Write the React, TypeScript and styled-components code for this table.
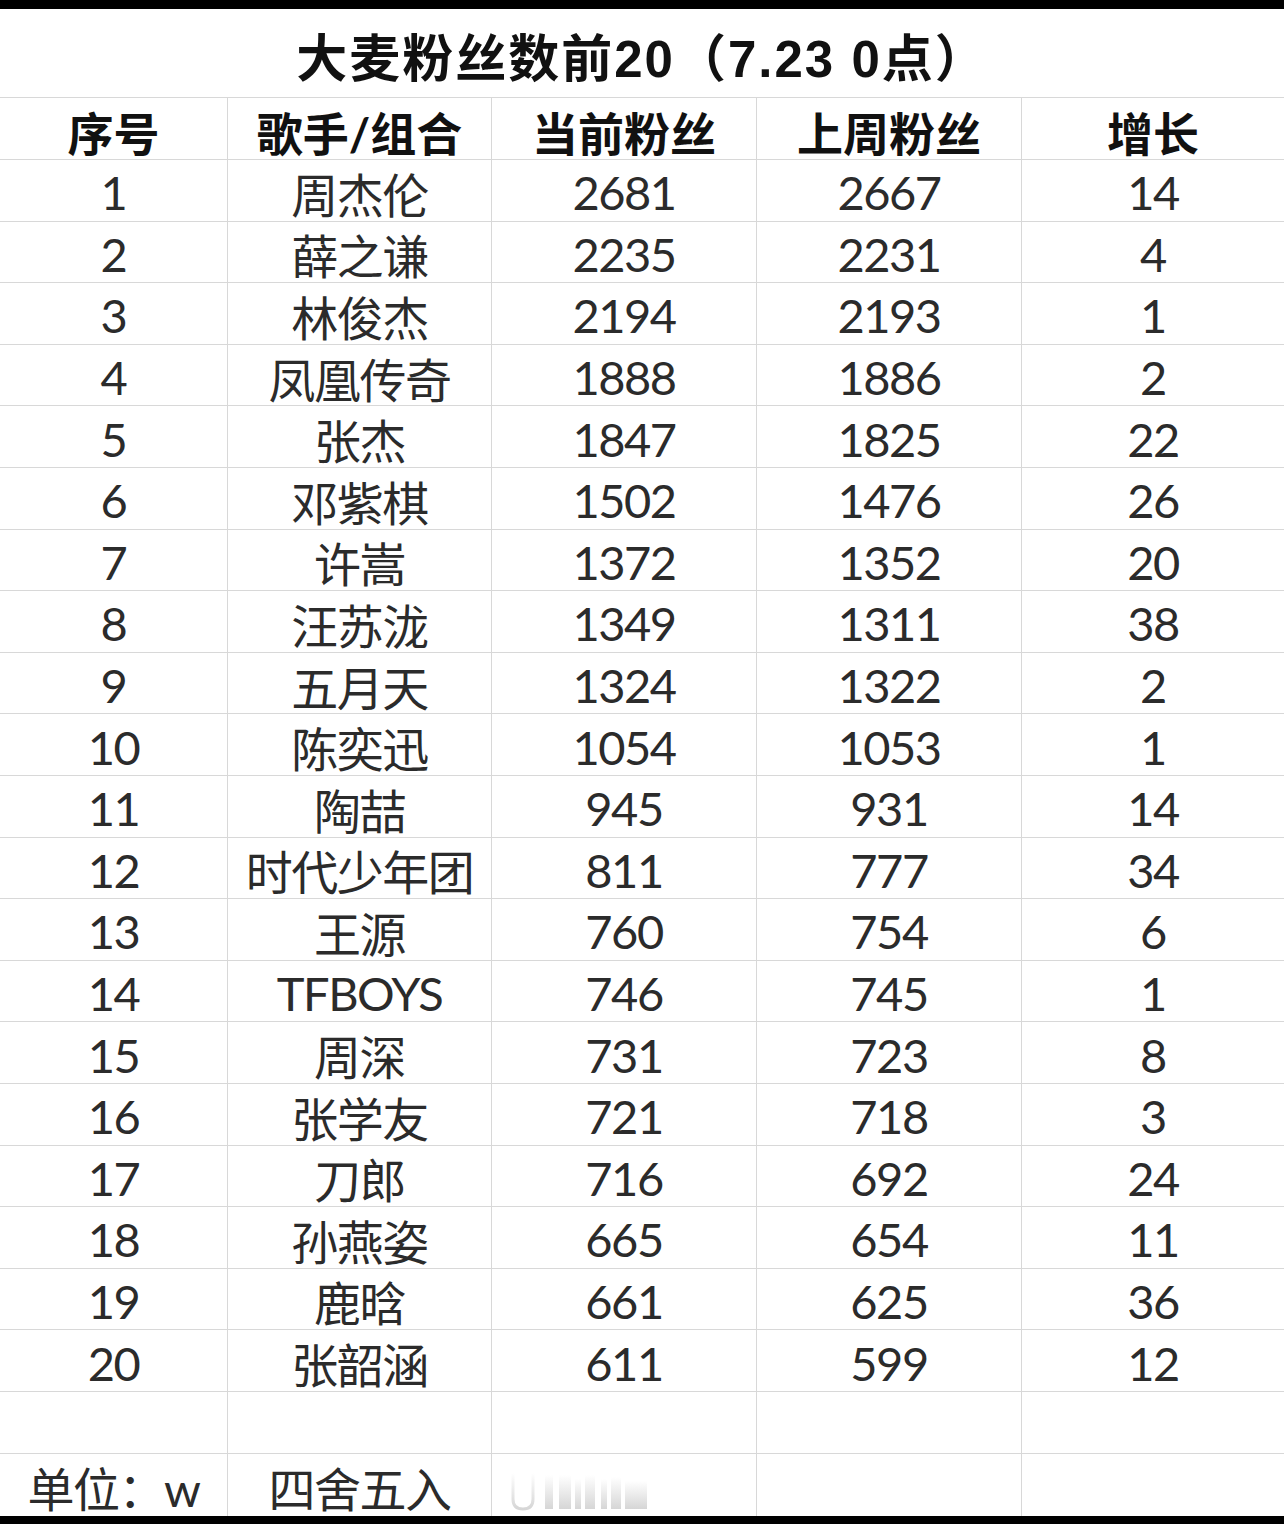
import styled, { createGlobalStyle } from 'styled-components'

// ─── Data ─────────────────────────────────────────────────────────────────────

interface Row {
  rank: number
  name: string
  current: number
  lastWeek: number
  growth: number
}

const rows: Row[] = [
  { rank: 1, name: '周杰伦', current: 2681, lastWeek: 2667, growth: 14 },
  { rank: 2, name: '薛之谦', current: 2235, lastWeek: 2231, growth: 4 },
  { rank: 3, name: '林俊杰', current: 2194, lastWeek: 2193, growth: 1 },
  { rank: 4, name: '凤凰传奇', current: 1888, lastWeek: 1886, growth: 2 },
  { rank: 5, name: '张杰', current: 1847, lastWeek: 1825, growth: 22 },
  { rank: 6, name: '邓紫棋', current: 1502, lastWeek: 1476, growth: 26 },
  { rank: 7, name: '许嵩', current: 1372, lastWeek: 1352, growth: 20 },
  { rank: 8, name: '汪苏泷', current: 1349, lastWeek: 1311, growth: 38 },
  { rank: 9, name: '五月天', current: 1324, lastWeek: 1322, growth: 2 },
  { rank: 10, name: '陈奕迅', current: 1054, lastWeek: 1053, growth: 1 },
  { rank: 11, name: '陶喆', current: 945, lastWeek: 931, growth: 14 },
  { rank: 12, name: '时代少年团', current: 811, lastWeek: 777, growth: 34 },
  { rank: 13, name: '王源', current: 760, lastWeek: 754, growth: 6 },
  { rank: 14, name: 'TFBOYS', current: 746, lastWeek: 745, growth: 1 },
  { rank: 15, name: '周深', current: 731, lastWeek: 723, growth: 8 },
  { rank: 16, name: '张学友', current: 721, lastWeek: 718, growth: 3 },
  { rank: 17, name: '刀郎', current: 716, lastWeek: 692, growth: 24 },
  { rank: 18, name: '孙燕姿', current: 665, lastWeek: 654, growth: 11 },
  { rank: 19, name: '鹿晗', current: 661, lastWeek: 625, growth: 36 },
  { rank: 20, name: '张韶涵', current: 611, lastWeek: 599, growth: 12 },
]

const headers = ['序号', '歌手/组合', '当前粉丝', '上周粉丝', '增长']

// ─── Component ────────────────────────────────────────────────────────────────

export default function App() {
  return (
    <>
      <GlobalStyle />
      <Sheet>
        <TitleCell>大麦粉丝数前20（7.23 0点）</TitleCell>

        {headers.map((h, i) => (
          <HeadCell key={h} $last={i === headers.length - 1}>
            {h}
          </HeadCell>
        ))}

        {rows.map((r) => (
          <RowGroup key={r.rank}>
            <Cell>{r.rank}</Cell>
            <Cell>{r.name}</Cell>
            <Cell>{r.current}</Cell>
            <Cell>{r.lastWeek}</Cell>
            <Cell $last>{r.growth}</Cell>
          </RowGroup>
        ))}

        {/* empty spacer row */}
        <Cell />
        <Cell />
        <Cell />
        <Cell />
        <Cell $last />

        <Cell $noBottom>单位：w</Cell>
        <Cell $noBottom>四舍五入</Cell>
        <Cell $noBottom>
          <Watermark />
        </Cell>
        <Cell $noBottom />
        <Cell $noBottom $last />
      </Sheet>
    </>
  )
}

function Watermark() {
  return (
    <WatermarkSvg viewBox="0 0 150 44" aria-hidden>
      <defs>
        <linearGradient id="wm" x1="0" y1="0" x2="0" y2="1">
          <stop offset="0" stopColor="#ffffff" />
          <stop offset="1" stopColor="#d6d6d6" />
        </linearGradient>
      </defs>
      <path
        d="M4 4 V30 Q4 40 14 40 Q24 40 24 30 V4"
        fill="none"
        stroke="url(#wm)"
        strokeWidth="3"
      />
      <rect x="36" y="6" width="8" height="34" fill="url(#wm)" />
      <rect x="50" y="6" width="12" height="34" fill="url(#wm)" />
      <rect x="66" y="10" width="6" height="30" fill="url(#wm)" />
      <rect x="76" y="6" width="10" height="34" fill="url(#wm)" />
      <rect x="92" y="10" width="6" height="30" fill="url(#wm)" />
      <rect x="102" y="8" width="10" height="32" fill="url(#wm)" />
      <rect x="116" y="12" width="22" height="28" fill="url(#wm)" />
    </WatermarkSvg>
  )
}

// ─── Styles ───────────────────────────────────────────────────────────────────

const GlobalStyle = createGlobalStyle`
  html, body {
    margin: 0;
    padding: 0;
    background: #000;
  }
  body {
    font-family: Lato, "Noto Sans CJK SC", sans-serif;
    color: #2b2b2b;
  }
`

const Sheet = styled.div`
  width: 1284px;
  margin-top: 9px;
  margin-bottom: 8px;
  background: #fff;
  display: grid;
  grid-template-columns: 228px 264px 265px 265px 262px;
  grid-template-rows: 89px 62px repeat(20, 61.6px) 62px 62px;
`

const RowGroup = styled.div`
  display: contents;
`

const TitleCell = styled.div`
  grid-column: 1 / -1;
  display: flex;
  align-items: center;
  justify-content: center;
  padding-top: 4px;
  box-sizing: border-box;
  border-bottom: 1px solid #d8d8d8;
  font-family: "Liberation Sans", "Noto Sans CJK SC", sans-serif;
  font-size: 51px;
  font-weight: 700;
  color: #111;
  letter-spacing: 2px;
`

const Cell = styled.div<{ $last?: boolean; $noBottom?: boolean }>`
  display: flex;
  align-items: center;
  justify-content: center;
  box-sizing: border-box;
  padding-top: 4px;
  border-right: ${({ $last }) => ($last ? 'none' : '1px solid #d8d8d8')};
  border-bottom: ${({ $noBottom }) => ($noBottom ? 'none' : '1px solid #d8d8d8')};
  font-size: 47px;
  font-weight: 400;
  letter-spacing: -1.5px;
  white-space: nowrap;
  overflow: visible;
`

const HeadCell = styled(Cell)`
  font-size: 46px;
  font-weight: 700;
  letter-spacing: 0;
  color: #111;
`

const WatermarkSvg = styled.svg`
  width: 150px;
  height: 44px;
  margin-right: 80px;
  margin-top: 8px;
`
